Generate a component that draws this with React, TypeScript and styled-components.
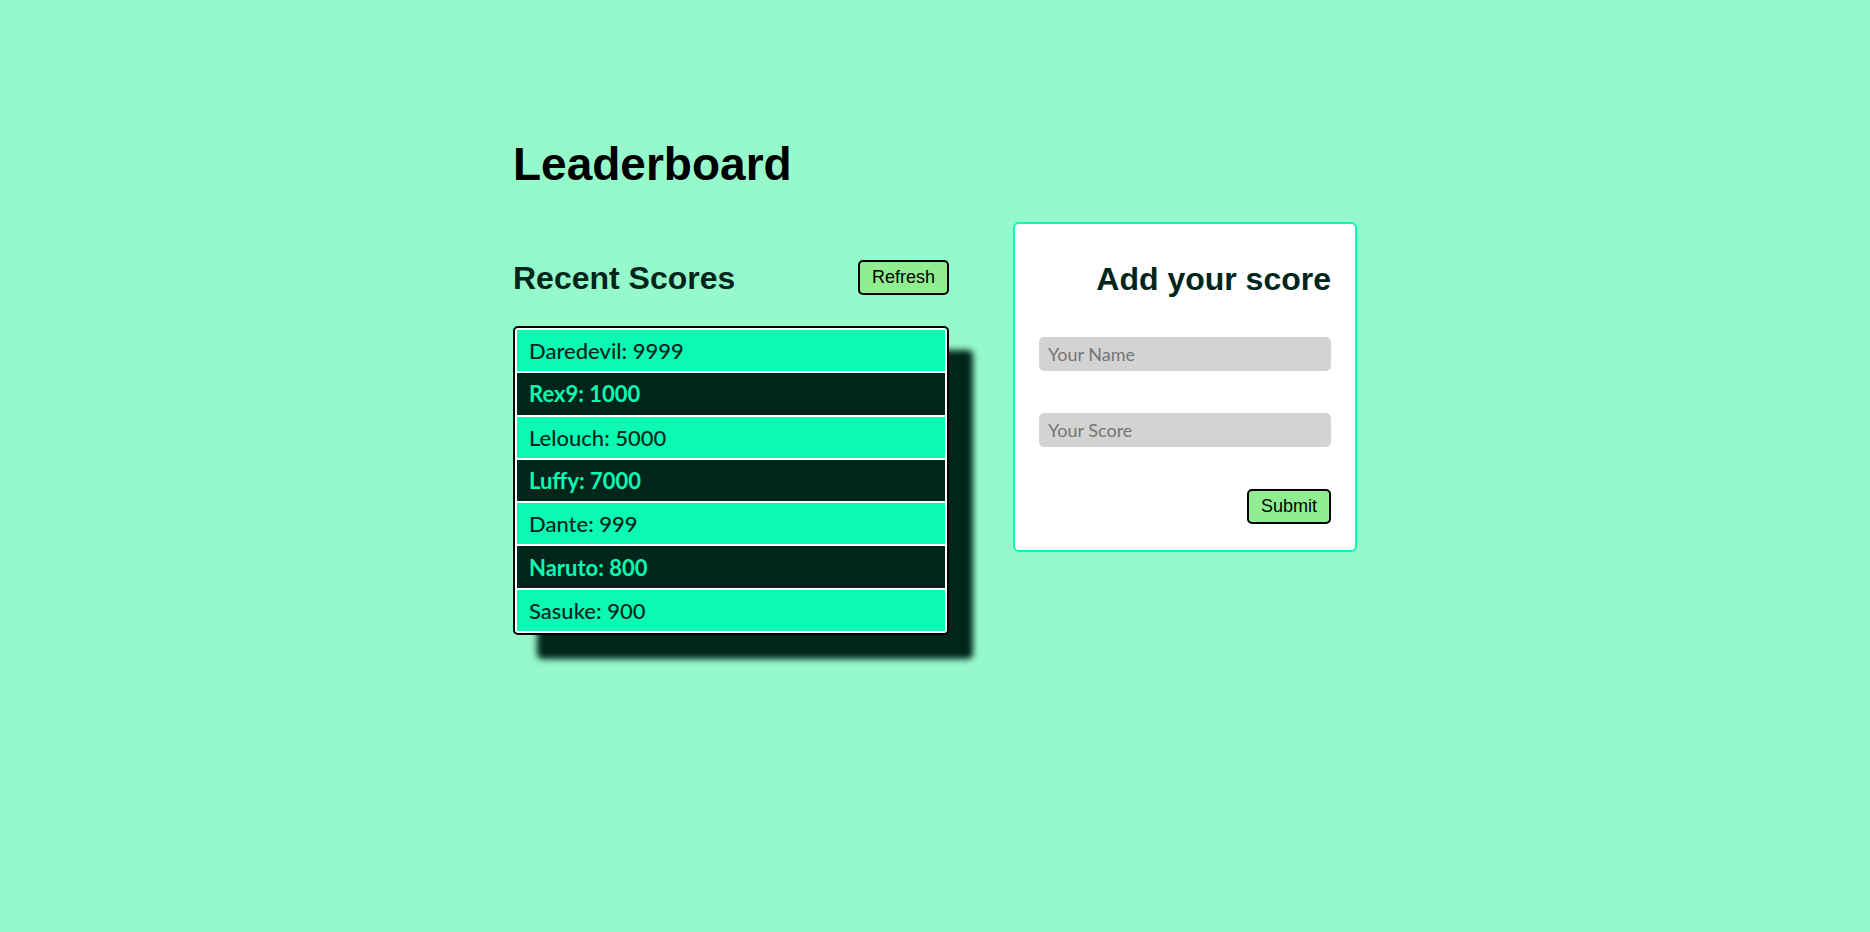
import styled, { createGlobalStyle } from 'styled-components';

const GlobalStyle = createGlobalStyle`
body {
  margin: 0;
  background-color: #96f9cb;
  font-family: Lato, "Open Sans", sans-serif;
}
`;

const Page = styled.div`
box-sizing: border-box;
width: 844px;
min-height: 100vh;
margin: 0 auto;
padding-top: 141px;
padding-bottom: 60px;
`;

const Title = styled.h1`
margin: 0;
font-family: "Liberation Sans", Arial, sans-serif;
font-size: 46px;
line-height: 1;
font-weight: 700;
color: #000;
`;

const Columns = styled.div`
display: flex;
align-items: flex-start;
justify-content: space-between;
margin-top: 35px;
`;

const LeftColumn = styled.div`
width: 436px;
padding-top: 38px;
`;

const HeadRow = styled.div`
display: flex;
align-items: center;
justify-content: space-between;
height: 35px;
`;

const Heading = styled.h2<{ $align?: string }>`
margin: 0;
font-family: "Liberation Sans", Arial, sans-serif;
font-size: 32px;
line-height: 1;
font-weight: 700;
color: #00261c;
text-align: ${(p) => p.$align || 'left'};
`;

const Button = styled.button<{ $w: number }>`
width: ${(p) => p.$w}px;
height: 35px;
padding: 0;
border: 2px solid #000;
border-radius: 5px;
background-color: #90ee90;
font-family: "Liberation Sans", Arial, sans-serif;
font-size: 18px;
color: #000;
cursor: pointer;
`;

const List = styled.ul`
list-style: none;
margin: 31px 0 0;
padding: 2px;
display: flex;
flex-direction: column;
gap: 2px;
background-color: #fff;
border: 2px solid #000;
border-radius: 5px;
box-shadow: 24px 24px 6px #00261c;
`;

const Row = styled.li<{ $dark: boolean }>`
display: flex;
align-items: center;
height: 41.3px;
padding-left: 12px;
font-size: 22px;
font-weight: ${(p) => (p.$dark ? 700 : 500)};
background-color: ${(p) => (p.$dark ? '#00261c' : '#0afab4')};
color: ${(p) => (p.$dark ? '#0afab4' : '#00261c')};
`;

const Card = styled.form`
box-sizing: border-box;
width: 344px;
padding: 24px 24px 26px;
display: flex;
flex-direction: column;
background-color: #fff;
border: 2px solid #0afab4;
border-radius: 6px;
`;

const CardHeading = styled(Heading)`
margin-top: 15px;
margin-bottom: 42px;
`;

const Input = styled.input`
box-sizing: border-box;
width: 100%;
height: 34px;
margin-bottom: 42px;
padding: 0 9px;
border: none;
border-radius: 5px;
background-color: #d3d3d3;
font-family: Lato, "Open Sans", sans-serif;
font-size: 18px;
color: #000;
outline: none;
&::placeholder {
  color: #757575;
}
`;

const SubmitRow = styled.div`
display: flex;
justify-content: flex-end;
`;

const scores = [
  { name: 'Daredevil', score: 9999 },
  { name: 'Rex9', score: 1000 },
  { name: 'Lelouch', score: 5000 },
  { name: 'Luffy', score: 7000 },
  { name: 'Dante', score: 999 },
  { name: 'Naruto', score: 800 },
  { name: 'Sasuke', score: 900 },
];

const App = () => {
  return (
    <>
      <GlobalStyle />
      <Page>
        <Title>Leaderboard</Title>
        <Columns>
          <LeftColumn>
            <HeadRow>
              <Heading>Recent Scores</Heading>
              <Button type="button" $w={91}>Refresh</Button>
            </HeadRow>
            <List>
              {scores.map((s, i) => (
                <Row key={s.name} $dark={i % 2 === 1}>
                  {s.name}: {s.score}
                </Row>
              ))}
            </List>
          </LeftColumn>
          <Card onSubmit={(e) => e.preventDefault()}>
            <CardHeading $align="right">Add your score</CardHeading>
            <Input placeholder="Your Name" />
            <Input placeholder="Your Score" />
            <SubmitRow>
              <Button type="submit" $w={84}>Submit</Button>
            </SubmitRow>
          </Card>
        </Columns>
      </Page>
    </>
  );
};

export default App;
